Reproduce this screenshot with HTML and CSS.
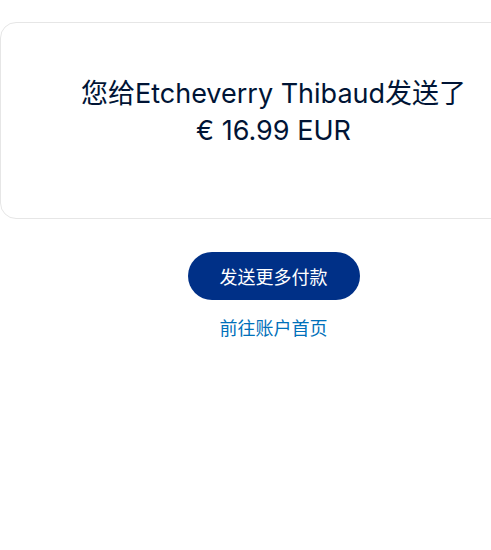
FILE: index.html
```html
<!DOCTYPE html>
<html lang="zh-CN">
<head>
<meta charset="utf-8">
<title>付款已发送</title>
<link rel="stylesheet" href="styles.css">
</head>
<body>
<div class="page">
  <section class="card">
    <h1 class="title">您给Etcheverry Thibaud发送了<br>€ 16.99 EUR</h1>
  </section>
  <div class="actions">
    <a class="btn" href="#">发送更多付款</a>
    <a class="link" href="#">前往账户首页</a>
  </div>
</div>
</body>
</html>
```
FILE: styles.css
```css
html, body {
  margin: 0;
  padding: 0;
  overflow: hidden;
  background: #ffffff;
}
body {
  font-family: Inter, "Noto Sans CJK SC", sans-serif;
  color: #001435;
}
.page {
  width: 547px;
  padding-top: 22px;
}
.card {
  box-sizing: border-box;
  height: 197px;
  border: 1px solid #e6e6e6;
  border-radius: 16px;
  padding-top: 52px;
}
.title {
  margin: 0;
  font-weight: 400;
  font-size: 27px;
  line-height: 37px;
  text-align: center;
}
.actions {
  display: flex;
  flex-direction: column;
  align-items: center;
  padding-top: 33px;
}
.btn {
  display: flex;
  align-items: center;
  justify-content: center;
  width: 172px;
  height: 48px;
  border-radius: 24px;
  background: #003087;
  color: #ffffff;
  font-size: 18px;
  text-decoration: none;
}
.link {
  margin-top: 17px;
  font-size: 18px;
  line-height: 24px;
  color: #0070ba;
  text-decoration: none;
}
```
